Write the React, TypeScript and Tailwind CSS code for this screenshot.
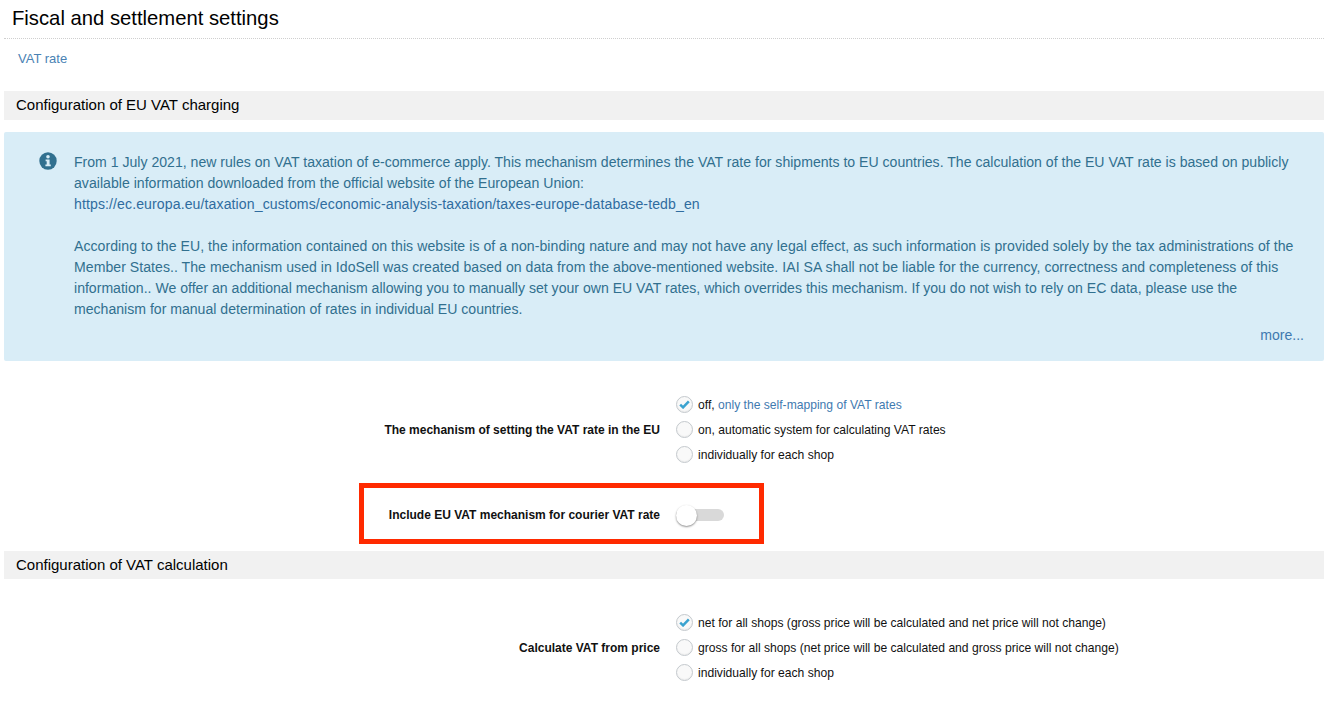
import React from "react";

function Check() {
  return (
    <svg viewBox="0 0 12 10" className="w-[11px] h-[9px]">
      <path d="M1.2 5.2 L4.4 8.2 L10.8 1.6" fill="none" stroke="#3ba3d0" strokeWidth="2.8" />
    </svg>
  );
}

function Radio({ checked, children }: { checked?: boolean; children: React.ReactNode }) {
  return (
    <div className="flex items-center h-[25px]">
      <span className="w-[17px] h-[17px] rounded-full border border-[#c4c9cd] bg-[#f9f9f9] shadow-[inset_0_-1px_1px_rgba(0,0,0,0.05)] flex items-center justify-center shrink-0">
        {checked && <Check />}
      </span>
      <span className="ml-[5px] pt-[1px] text-[12.12px] text-[#111] whitespace-nowrap">{children}</span>
    </div>
  );
}

function SectionBar({ className, children }: { className: string; children: React.ReactNode }) {
  return <div className={`${className} bg-[#f1f1f1] pl-3 flex items-center text-[15px] text-black`}>{children}</div>;
}

function RadioRow({ label, children }: { label: string; children: React.ReactNode }) {
  return (
    <div className="flex items-center">
      <div className="w-[656px] text-right text-[12px] font-bold text-[#111]">{label}</div>
      <div className="ml-4">{children}</div>
    </div>
  );
}

export default function App() {
  return (
    <div className="w-[1329px] h-[708px] overflow-hidden bg-white px-1 font-['Liberation_Sans',Arial,sans-serif]">
      <div className="h-[39px] border-b border-dotted border-[#cfcfcf] pl-2 pt-[6px] text-[20.25px] leading-[24px] text-black w-[1320px]">
        Fiscal and settlement settings
      </div>
      <div className="pl-[14px] pt-[12px] h-[52px] text-[13px] leading-[15px] text-[#4a82b4]">VAT rate</div>
      <div className="w-[1320px]">
        <SectionBar className="h-[29px]">Configuration of EU VAT charging</SectionBar>
        <div className="mt-3 h-[229px] bg-[#d9edf7] rounded-[2px] flex text-[14.08px] leading-[21px] text-[#31708f]">
          <div className="w-[70px] pl-[35px] pt-[20px] shrink-0">
            <svg viewBox="0 0 18 18" className="w-[18px] h-[18px]">
              <circle cx="9" cy="9" r="8.7" fill="#31708f" />
              <circle cx="9" cy="4.7" r="1.8" fill="#d9edf7" />
              <path d="M6.6 7.4H10.6V12.4H11.8V14.2H6.4V12.4H7.7V9.2H6.6Z" fill="#d9edf7" />
            </svg>
          </div>
          <div className="pt-[20px] pr-[20px] flex-1">
            <p className="whitespace-nowrap">
              From 1 July 2021, new rules on VAT taxation of e-commerce apply. This mechanism determines the VAT rate for shipments to EU countries. The calculation of the EU VAT rate is based on publicly
              <br />
              <span className="tracking-[0.02px]">available information downloaded from the official website of the European Union:</span>
              <br />
              <span className="text-[#2f6c9f] tracking-[0.105px]">https://ec.europa.eu/taxation_customs/economic-analysis-taxation/taxes-europe-database-tedb_en</span>
            </p>
            <p className="mt-[21px] whitespace-nowrap">
              <span className="tracking-[0.05px]">According to the EU, the information contained on this website is of a non-binding nature and may not have any legal effect, as such information is provided solely by the tax administrations of the</span>
              <br />
              <span className="tracking-[0.04px]">Member States.. The mechanism used in IdoSell was created based on data from the above-mentioned website. IAI SA shall not be liable for the currency, correctness and completeness of this</span>
              <br />
              information.. We offer an additional mechanism allowing you to manually set your own EU VAT rates, which overrides this mechanism. If you do not wish to rely on EC data, please use the
              <br />
              mechanism for manual determination of rates in individual EU countries.
            </p>
            <div className="mt-[5px] text-right text-[#3f7ab0]">more...</div>
          </div>
        </div>

        <div className="mt-[31px]">
          <RadioRow label="The mechanism of setting the VAT rate in the EU">
            <Radio checked>
              off, <span className="text-[#3f7ab0]">only the self-mapping of VAT rates</span>
            </Radio>
            <Radio>on, automatic system for calculating VAT rates</Radio>
            <Radio>individually for each shop</Radio>
          </RadioRow>
        </div>

        <div className="mt-[16px] ml-[355px] w-[405px] h-[61px] border-[5px] border-[#ff2a00] flex items-center pt-[3px]">
          <div className="w-[296px] text-right text-[12px] font-bold text-[#111] -mt-[1px]">Include EU VAT mechanism for courier VAT rate</div>
          <div className="ml-4 relative w-[48px] h-[21px] flex items-center">
            <div className="w-[48px] h-[12px] rounded-full bg-[#d9d9d9]" />
            <div className="absolute left-0 top-0 w-[21px] h-[21px] rounded-full bg-white shadow-[0_1px_2px_rgba(0,0,0,0.45)]" />
          </div>
        </div>

        <div className="mt-[7px]">
          <SectionBar className="h-[28px]">Configuration of VAT calculation</SectionBar>
        </div>

        <div className="mt-[31px]">
          <RadioRow label="Calculate VAT from price">
            <Radio checked>net for all shops (gross price will be calculated and net price will not change)</Radio>
            <Radio>gross for all shops (net price will be calculated and gross price will not change)</Radio>
            <Radio>individually for each shop</Radio>
          </RadioRow>
        </div>
      </div>
    </div>
  );
}
